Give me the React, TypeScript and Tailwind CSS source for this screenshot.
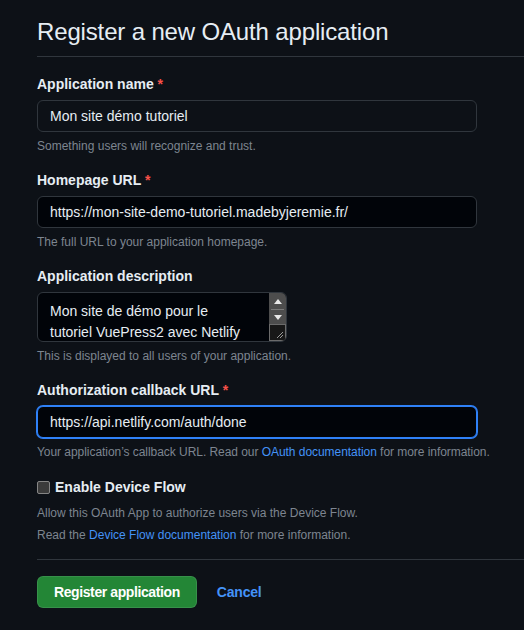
export default function App() {
  return (
    <main className="min-h-screen bg-[#0d1117] text-[#e6edf3] font-['Liberation_Sans',Arial,sans-serif] pl-[37px]">
      {/* Header */}
      <div className="pt-[14px] pb-[6px] border-b border-[#30363d]">
        <h1 className="text-[24px] leading-[36px] font-normal tracking-[-0.15px]">Register a new OAuth application</h1>
      </div>

      <form className="pt-[17px] w-[440px]" onSubmit={(e) => e.preventDefault()}>
        {/* Application name */}
        <div>
          <label className="block text-[14px] leading-[21px] font-bold mb-[5px]">
            Application name <span className="text-[#f85149]">*</span>
          </label>
          <div className="h-[32px] rounded-[6px] border border-[#30363d] bg-[#0d1117] px-[12px] flex items-center text-[14px]">
            Mon site démo tutoriel
          </div>
          <p className="mt-[5px] text-[12px] leading-[18px] text-[#7d8590]">Something users will recognize and trust.</p>
        </div>

        {/* Homepage URL */}
        <div className="mt-[15px]">
          <label className="block text-[14px] leading-[21px] font-bold mb-[5px]">
            Homepage URL <span className="text-[#f85149]">*</span>
          </label>
          <div className="h-[32px] rounded-[6px] border border-[#30363d] bg-[#010409] px-[12px] flex items-center text-[14px]">
            https://mon-site-demo-tutoriel.madebyjeremie.fr/
          </div>
          <p className="mt-[5px] text-[12px] leading-[18px] text-[#7d8590]">The full URL to your application homepage.</p>
        </div>

        {/* Description */}
        <div className="mt-[15px]">
          <label className="block text-[14px] leading-[21px] font-bold mb-[5px]">Application description</label>
          <div className="w-[250px] h-[50px] rounded-[6px] border border-[#30363d] bg-[#010409] flex overflow-hidden">
            <div className="flex-1 pl-[12px] pt-[8px] text-[14px] leading-[21px] whitespace-nowrap overflow-hidden">
              Mon site de démo pour le
              <br />
              tutoriel VuePress2 avec Netlify
            </div>
            <div className="w-[17px] bg-[#4d4d4d] flex flex-col">
              <div className="h-[16px] flex items-center justify-center">
                <svg width="8" height="5" viewBox="0 0 8 5"><path d="M0 5L4 0L8 5Z" fill="#e8e8e8" /></svg>
              </div>
              <div className="h-px bg-[#7a7a7a] mx-[2px]" />
              <div className="h-[14px] flex items-center justify-center">
                <svg width="8" height="5" viewBox="0 0 8 5"><path d="M0 0L4 5L8 0Z" fill="#e8e8e8" /></svg>
              </div>
              <div className="flex-1 bg-[#181818] border border-[#6b6b6b] relative">
                <svg className="absolute right-[1px] bottom-[1px]" width="8" height="8" viewBox="0 0 8 8">
                  <path d="M1 7L7 1M4 7L7 4" stroke="#9a9a9a" strokeWidth="1" />
                </svg>
              </div>
            </div>
          </div>
          <p className="mt-[5px] text-[12px] leading-[18px] text-[#7d8590]">This is displayed to all users of your application.</p>
        </div>

        {/* Callback URL */}
        <div className="mt-[15px]">
          <label className="block text-[14px] leading-[21px] font-bold mb-[5px]">
            Authorization callback URL <span className="text-[#f85149]">*</span>
          </label>
          <div className="h-[32px] rounded-[6px] border border-[#2f81f7] ring-1 ring-[#2f81f7] bg-[#010409] px-[12px] flex items-center text-[14px]">
            https://api.netlify.com/auth/done
          </div>
          <p className="mt-[5px] text-[12px] leading-[18px] text-[#7d8590] whitespace-nowrap tracking-[-0.05px]">
            Your application’s callback URL. Read our <a className="text-[#4493f8]">OAuth documentation</a> for more information.
          </p>
        </div>

        {/* Device flow */}
        <div className="mt-[16px]">
          <label className="flex items-center gap-[5px] text-[14px] leading-[21px] font-bold">
            <span className="w-[13px] h-[13px] rounded-[2px] bg-[#3b3b3b] border border-[#858585]" />
            Enable Device Flow
          </label>
          <p className="mt-[6px] text-[12px] leading-[18px] text-[#7d8590]">Allow this OAuth App to authorize users via the Device Flow.</p>
          <p className="mt-[4px] text-[12px] leading-[18px] text-[#7d8590]">
            Read the <a className="text-[#4493f8]">Device Flow documentation</a> for more information.
          </p>
        </div>
      </form>

      <div className="mt-[15px] border-t border-[#30363d] pt-[16px] flex items-center gap-[20px]">
        <button className="h-[32px] px-[16px] rounded-[6px] bg-[#238636] border border-[rgba(240,246,252,0.1)] text-white text-[14px] font-bold tracking-[-0.4px]">
          Register application
        </button>
        <a className="text-[#4493f8] text-[14px] font-bold tracking-[-0.2px]">Cancel</a>
      </div>
    </main>
  )
}
